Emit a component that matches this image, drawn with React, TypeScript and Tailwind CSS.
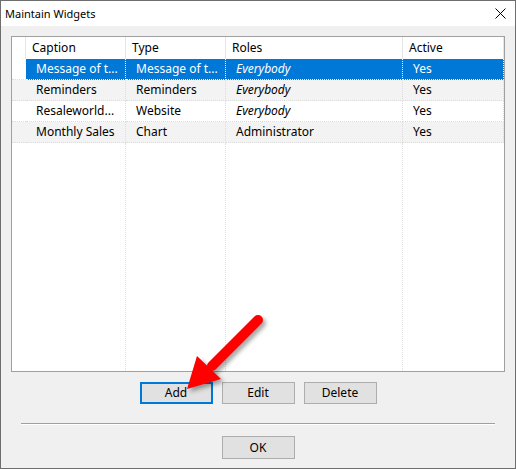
const rows = [
  { caption: "Message of t...", type: "Message of t...", roles: "Everybody", italic: true, active: "Yes" },
  { caption: "Reminders", type: "Reminders", roles: "Everybody", italic: true, active: "Yes" },
  { caption: "Resaleworld...", type: "Website", roles: "Everybody", italic: true, active: "Yes" },
  { caption: "Monthly Sales", type: "Chart", roles: "Administrator", italic: false, active: "Yes" },
];

function Header() {
  const head = "flex items-center border-r border-[#e5e5e5] bg-white pl-[6px]";
  return (
    <>
      <div className="border-r border-[#e5e5e5] bg-white" />
      <div className={head}>Caption</div>
      <div className={head}>Type</div>
      <div className={head}>Roles</div>
      <div className={head}>Active</div>
    </>
  );
}

function Row({ row, index }: { row: (typeof rows)[number]; index: number }) {
  const selected = index === 0;
  const stripe = index % 2 === 1;
  const bg = selected ? "bg-[#0078d7] text-white border-white" : stripe ? "bg-[#f3f3f3] border-[#dcdcdc]" : "bg-white border-[#dcdcdc]";
  const cell = `flex items-center whitespace-nowrap overflow-hidden border-r border-b border-dotted pl-[10px] ${bg}`;
  const lead = selected ? "bg-white border-[#dcdcdc]" : stripe ? "bg-[#f3f3f3] border-[#dcdcdc]" : "bg-white border-[#dcdcdc]";
  return (
    <>
      <div className={`border-b border-dotted ${lead}`} />
      <div className={cell}>{row.caption}</div>
      <div className={cell}>{row.type}</div>
      <div className={`${cell} ${row.italic ? "italic" : ""}`}>{row.roles}</div>
      <div className={cell}>{row.active}</div>
    </>
  );
}

function Button({ label, focused }: { label: string; focused?: boolean }) {
  return (
    <button
      className={`flex h-[22px] w-[73px] items-center justify-center bg-[#e1e1e1] text-[12px] text-black ${
        focused ? "border-2 border-[#0078d7]" : "border border-[#adadad]"
      }`}
    >
      {label}
    </button>
  );
}

export default function App() {
  return (
    <div className="relative flex h-[469px] w-[516px] flex-col border border-[#6e6e6e] bg-[#f0f0f0] font-['Noto_Sans',sans-serif] text-[12px] leading-[16px] text-black">
      <div className="flex h-[25px] shrink-0 items-center justify-between bg-white pl-[4px] pr-[9px]">
        <span className="text-[11px]">Maintain Widgets</span>
        <svg width="11" height="11" viewBox="0 0 11 11">
          <path d="M0.5 0.5 L10.5 10.5 M10.5 0.5 L0.5 10.5" stroke="#000" strokeWidth="1" />
        </svg>
      </div>

      <div className="flex flex-1 flex-col px-[10px] pt-[10px]">
        <div className="h-[336px] border border-[#a0a0a0] bg-white">
          <div className="grid h-full w-[492px] grid-cols-[14px_100px_100px_177px_101px] grid-rows-[22px_21px_21px_21px_21px_1fr]">
            <Header />
            {rows.map((r, i) => (
              <Row key={i} row={r} index={i} />
            ))}
            <div />
            <div className="border-r border-dotted border-[#e0e0e0]" />
            <div className="border-r border-dotted border-[#e0e0e0]" />
            <div className="border-r border-dotted border-[#e0e0e0]" />
            <div />
          </div>
        </div>

        <div className="mt-[10px] flex justify-center gap-[9px]">
          <Button label="Add" focused />
          <Button label="Edit" />
          <Button label="Delete" />
        </div>

        <div className="mx-[10px] mt-[19px] h-[2px] border-t border-b border-t-[#a0a0a0] border-b-white" />

        <div className="mt-[11px] flex justify-center">
          <button className="flex h-[23px] w-[73px] items-center justify-center border border-[#adadad] bg-[#e1e1e1] text-[12px]">
            OK
          </button>
        </div>
      </div>

      <svg
        className="pointer-events-none absolute left-[-1px] top-[-1px] drop-shadow-[3px_3px_2px_rgba(0,0,0,0.35)]"
        width="516"
        height="469"
        viewBox="0 0 516 469"
      >
        <line x1="258" y1="320" x2="212" y2="366" stroke="#ff0000" strokeWidth="10" strokeLinecap="round" />
        <polygon points="187,389 197,356 221,379" fill="#ff0000" />
      </svg>
    </div>
  );
}
